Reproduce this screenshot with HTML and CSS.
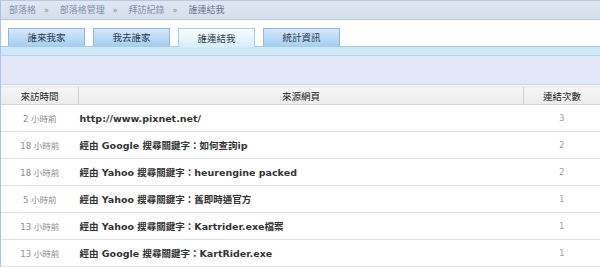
FILE: index.html
```html
<!DOCTYPE html>
<html lang="zh-Hant">
<head>
  <meta charset="UTF-8">
  <title>誰連結我</title>
  <link rel="stylesheet" href="styles.css">
</head>
<body>
  <div class="page">
    <div class="crumbs">
      <span>部落格</span><span class="sep">»</span>
      <span>部落格管理</span><span class="sep">»</span>
      <span>拜訪紀錄</span><span class="sep">»</span>
      <span class="current">誰連結我</span>
    </div>

    <ul class="tabs">
      <li class="tab">誰來我家</li>
      <li class="tab">我去誰家</li>
      <li class="tab active">誰連結我</li>
      <li class="tab">統計資訊</li>
    </ul>
    <div class="strip"></div>
    <div class="panel"></div>

    <table class="log">
      <thead>
        <tr>
          <th class="time">來訪時間</th>
          <th class="source">來源網頁</th>
          <th class="count">連結次數</th>
        </tr>
      </thead>
      <tbody>
        <tr>
          <td class="time">2 小時前</td>
          <td class="source">http://www.pixnet.net/</td>
          <td class="count">3</td>
        </tr>
        <tr>
          <td class="time">18 小時前</td>
          <td class="source">經由 Google 搜尋關鍵字：如何查詢ip</td>
          <td class="count">2</td>
        </tr>
        <tr>
          <td class="time">18 小時前</td>
          <td class="source">經由 Yahoo 搜尋關鍵字：heurengine packed</td>
          <td class="count">2</td>
        </tr>
        <tr>
          <td class="time">5 小時前</td>
          <td class="source">經由 Yahoo 搜尋關鍵字：舊即時通官方</td>
          <td class="count">1</td>
        </tr>
        <tr>
          <td class="time">13 小時前</td>
          <td class="source">經由 Yahoo 搜尋關鍵字：Kartrider.exe檔案</td>
          <td class="count">1</td>
        </tr>
        <tr>
          <td class="time">13 小時前</td>
          <td class="source">經由 Google 搜尋關鍵字：KartRider.exe</td>
          <td class="count">1</td>
        </tr>
      </tbody>
    </table>
  </div>
</body>
</html>
```

FILE: styles.css
```css
body {
  margin: 0;
  background: #fff;
  font-family: "DejaVu Sans", "Noto Sans CJK TC", sans-serif;
  overflow: hidden;
}

.page {
  border-left: 1px solid #a6c4e6;
  min-height: 267px;
}

.crumbs {
  height: 18px;
  line-height: 18px;
  padding-left: 8px;
  border-top: 1px solid #b4c9e6;
  border-bottom: 1px solid #b4c9e6;
  background: linear-gradient(#e0e7f2, #d4deec);
  color: #7f90aa;
  font-size: 9px;
}

.crumbs .sep {
  margin: 0 8px;
  font-size: 8px;
}

.crumbs .current {
  color: #66758e;
}

.tabs {
  display: flex;
  gap: 8px;
  margin: 0;
  padding: 8px 0 0 7px;
  list-style: none;
  height: 18px;
}

.tab {
  box-sizing: border-box;
  width: 77px;
  height: 18px;
  border: 1px solid #94b8dc;
  border-bottom: none;
  background: linear-gradient(#d3e8fa, #a6cef1);
  color: #2e3a4c;
  font-size: 9.5px;
  line-height: 18px;
  text-align: center;
}

.tab.active {
  height: 19px;
  position: relative;
  z-index: 1;
  border-color: #aecbe6;
  background: linear-gradient(#f7fbff, #d9eefd);
  line-height: 20px;
}

.strip {
  height: 8px;
  border-top: 1px solid #a9c9e7;
  border-bottom: 1px solid #b9d2ee;
  background: #cfe9fc;
}

.panel {
  height: 28px;
  border-bottom: 1px solid #c5d2ea;
  background: #e2e8f8;
}

.log {
  width: 100%;
  margin-top: 1px;
  border-collapse: collapse;
}

.log th {
  height: 17px;
  padding: 0;
  border-top: 1px solid #e6e6e6;
  border-bottom: 1px solid #d6d6d6;
  background: linear-gradient(#f6f6f6, #ebebeb);
  color: #222;
  font-size: 9.5px;
  font-weight: normal;
}

.log th + th {
  border-left: 1px solid #d2d2d2;
}

.log td {
  height: 26px;
  padding: 0;
  border-bottom: 1px solid #e0e0e0;
}

.log .time {
  width: 77px;
  text-align: center;
}

.log td.time {
  color: #8a8a8a;
  font-size: 8.5px;
}

.log td.source {
  padding-left: 1px;
  color: #333;
  font-size: 9.5px;
  font-weight: bold;
}

.log .count {
  width: 76px;
  text-align: center;
}

.log td.count {
  color: #999;
  font-size: 8px;
}
```
